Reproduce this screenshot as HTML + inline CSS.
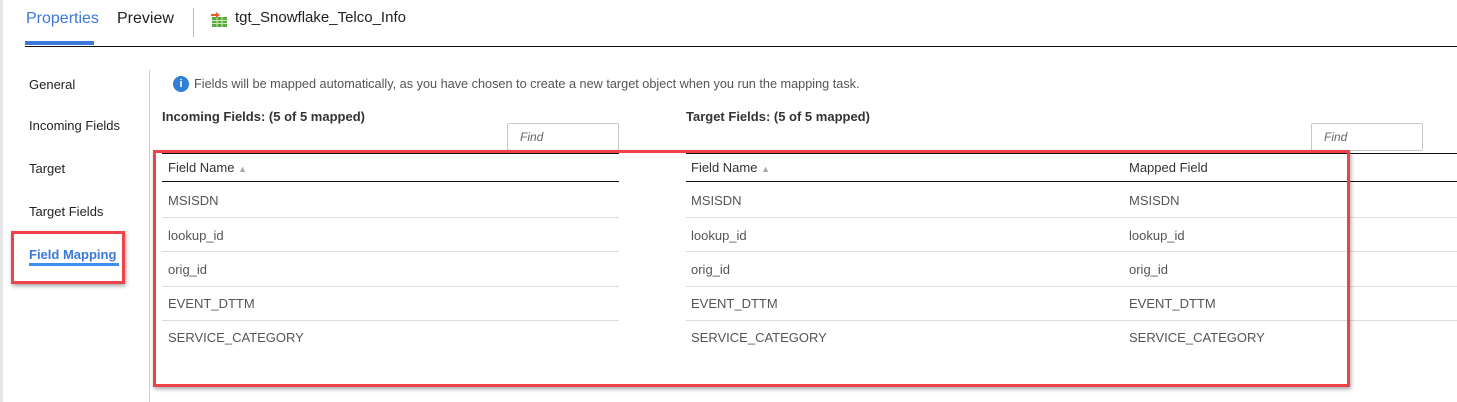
<!DOCTYPE html>
<html><head><style>
body{margin:0;width:1457px;height:402px;background:#fff;position:relative;overflow:hidden;font-family:"Liberation Sans",sans-serif;color:#222}
.a{position:absolute;white-space:nowrap}
.ln{position:absolute;height:1px}
.row{position:absolute;font-size:13px;color:#555}
.box{position:absolute;border:3px solid #ee434a;box-shadow:1px 2px 4px rgba(0,0,0,.35)}
</style></head><body>
<div class="a" style="left:0;top:0;width:3px;height:402px;background:#e6e6e6"></div>
<div class="a" style="left:26px;top:10px;font-size:16px;color:#3b78d8">Properties</div>
<div class="a" style="left:25px;top:41px;width:69px;height:4px;background:#3b78d8"></div>
<div class="a" style="left:117px;top:10px;font-size:16px;color:#222">Preview</div>
<div class="a" style="left:193px;top:8px;width:1px;height:29px;background:#bbb"></div>
<svg class="a" style="left:210px;top:12px" width="18" height="16" viewBox="0 0 18 16">
<rect x="2" y="5" width="15" height="10" fill="#5aaa3c"/>
<path d="M2 8.5h15M2 11.5h15M7 5v10M12 5v10" stroke="#cfe8b8" stroke-width="1"/>
<path d="M1 2h5V0l4 3-4 3V4H1z" fill="#ee5a2a"/></svg>
<div class="a" style="left:235px;top:9px;font-size:15px;color:#222">tgt_Snowflake_Telco_Info</div>
<div class="ln" style="left:25px;top:46px;width:1432px;background:#111"></div>

<div class="a" style="left:149px;top:70px;width:1px;height:332px;background:#ccc"></div>
<div class="a" style="left:29px;top:77px;font-size:13px">General</div>
<div class="a" style="left:29px;top:118px;font-size:13px">Incoming Fields</div>
<div class="a" style="left:29px;top:161px;font-size:13px">Target</div>
<div class="a" style="left:29px;top:204px;font-size:13px">Target Fields</div>
<div class="a" style="left:29px;top:247px;font-size:13px;font-weight:bold;color:#3b78d8">Field Mapping</div>
<div class="a" style="left:29px;top:263px;width:90px;height:3px;background:#3b8ff0"></div>
<div class="box" style="left:11px;top:231px;width:108px;height:47px"></div>

<div class="a" style="left:173px;top:76px;width:16px;height:16px;border-radius:50%;background:#2f7fd8;color:#fff;font-size:11px;font-weight:bold;text-align:center;line-height:16px">i</div>
<div class="a" style="left:194px;top:77px;font-size:12.7px;color:#555">Fields will be mapped automatically, as you have chosen to create a new target object when you run the mapping task.</div>
<div class="a" style="left:162px;top:109px;font-size:13px;font-weight:bold;color:#333">Incoming Fields: (5 of 5 mapped)</div>
<div class="a" style="left:686px;top:109px;font-size:13px;font-weight:bold;color:#333">Target Fields: (5 of 5 mapped)</div>
<div class="a" style="left:507px;top:123px;width:110px;height:26px;border:1px solid #c8c8c8;border-radius:2px;font-size:12px;font-style:italic;color:#666;line-height:26px;text-indent:12px">Find</div>
<div class="a" style="left:1311px;top:123px;width:110px;height:26px;border:1px solid #c8c8c8;border-radius:2px;font-size:12px;font-style:italic;color:#666;line-height:26px;text-indent:12px">Find</div>

<div class="ln" style="left:162px;top:153px;width:457px;background:#111"></div>
<div class="ln" style="left:686px;top:153px;width:771px;background:#111"></div>
<div class="ln" style="left:162px;top:181px;width:457px;background:#111"></div>
<div class="ln" style="left:686px;top:181px;width:771px;background:#111"></div>
<div class="a" style="left:168px;top:160px;font-size:13px;color:#333">Field Name <span style="color:#aaa;font-size:9px">▲</span></div>
<div class="a" style="left:691px;top:160px;font-size:13px;color:#333">Field Name <span style="color:#aaa;font-size:9px">▲</span></div>
<div class="a" style="left:1129px;top:160px;font-size:13px;color:#333">Mapped Field</div>

<div class="ln" style="left:162px;top:217px;width:457px;background:#ddd"></div>
<div class="ln" style="left:162px;top:251px;width:457px;background:#ddd"></div>
<div class="ln" style="left:162px;top:286px;width:457px;background:#ddd"></div>
<div class="ln" style="left:162px;top:320px;width:457px;background:#ddd"></div>
<div class="ln" style="left:686px;top:217px;width:771px;background:#ddd"></div>
<div class="ln" style="left:686px;top:251px;width:771px;background:#ddd"></div>
<div class="ln" style="left:686px;top:286px;width:771px;background:#ddd"></div>
<div class="ln" style="left:686px;top:320px;width:771px;background:#ddd"></div>

<div class="row" style="left:168px;top:193px">MSISDN</div>
<div class="row" style="left:168px;top:228px">lookup_id</div>
<div class="row" style="left:168px;top:262px">orig_id</div>
<div class="row" style="left:168px;top:296px">EVENT_DTTM</div>
<div class="row" style="left:168px;top:330px">SERVICE_CATEGORY</div>
<div class="row" style="left:691px;top:193px">MSISDN</div>
<div class="row" style="left:691px;top:228px">lookup_id</div>
<div class="row" style="left:691px;top:262px">orig_id</div>
<div class="row" style="left:691px;top:296px">EVENT_DTTM</div>
<div class="row" style="left:691px;top:330px">SERVICE_CATEGORY</div>
<div class="row" style="left:1129px;top:193px">MSISDN</div>
<div class="row" style="left:1129px;top:228px">lookup_id</div>
<div class="row" style="left:1129px;top:262px">orig_id</div>
<div class="row" style="left:1129px;top:296px">EVENT_DTTM</div>
<div class="row" style="left:1129px;top:330px">SERVICE_CATEGORY</div>

<div class="box" style="left:153px;top:150px;width:1191px;height:231px"></div>
</body></html>
